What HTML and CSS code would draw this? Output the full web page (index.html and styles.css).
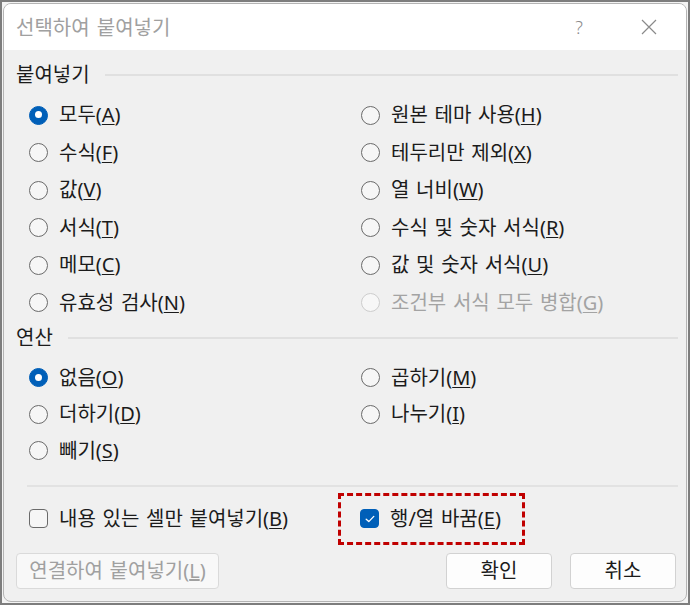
FILE: index.html
```html
<!DOCTYPE html>
<html lang="ko">
<head>
<meta charset="utf-8">
<title>선택하여 붙여넣기</title>
<link rel="stylesheet" href="styles.css">
</head>
<body>
<div class="dialog">
  <div class="titlebar">
    <span class="title">선택하여 붙여넣기</span>
    <span class="help">?</span>
    <span class="close"><svg width="16" height="16" viewBox="0 0 16 16"><path d="M1 1 L15 15 M15 1 L1 15" stroke="#8a8a8a" stroke-width="1.2" fill="none"/></svg></span>
  </div>
  <div class="content">
    <div class="group-label"><span>붙여넣기</span><i class="rule"></i></div>
    <div class="options paste">
      <label class="opt"><span class="radio on"></span>모두(<u>A</u>)</label>
      <label class="opt"><span class="radio"></span>원본 테마 사용(<u>H</u>)</label>
      <label class="opt"><span class="radio"></span>수식(<u>F</u>)</label>
      <label class="opt"><span class="radio"></span>테두리만 제외(<u>X</u>)</label>
      <label class="opt"><span class="radio"></span>값(<u>V</u>)</label>
      <label class="opt"><span class="radio"></span>열 너비(<u>W</u>)</label>
      <label class="opt"><span class="radio"></span>서식(<u>T</u>)</label>
      <label class="opt"><span class="radio"></span>수식 및 숫자 서식(<u>R</u>)</label>
      <label class="opt"><span class="radio"></span>메모(<u>C</u>)</label>
      <label class="opt"><span class="radio"></span>값 및 숫자 서식(<u>U</u>)</label>
      <label class="opt"><span class="radio"></span>유효성 검사(<u>N</u>)</label>
      <label class="opt disabled"><span class="radio"></span>조건부 서식 모두 병합(<u>G</u>)</label>
    </div>
    <div class="group-label op-label"><span>연산</span><i class="rule"></i></div>
    <div class="options ops">
      <label class="opt"><span class="radio on"></span>없음(<u>O</u>)</label>
      <label class="opt"><span class="radio"></span>곱하기(<u>M</u>)</label>
      <label class="opt"><span class="radio"></span>더하기(<u>D</u>)</label>
      <label class="opt"><span class="radio"></span>나누기(<u>I</u>)</label>
      <label class="opt"><span class="radio"></span>빼기(<u>S</u>)</label>
    </div>
    <div class="separator"></div>
    <div class="checks">
      <label class="opt chk-left"><span class="checkbox"></span>내용 있는 셀만 붙여넣기(<u>B</u>)</label>
      <div class="highlight">
        <label class="opt"><span class="checkbox on"><svg width="12" height="12" viewBox="0 0 12 12"><path d="M2.2 6.2 L4.8 8.6 L9.8 3.4" stroke="#fff" stroke-width="1.3" fill="none" stroke-linecap="round" stroke-linejoin="round"/></svg></span>행/열 바꿈(<u>E</u>)</label>
      </div>
    </div>
    <div class="buttons">
      <button class="btn btn-link" disabled>연결하여 붙여넣기(<u>L</u>)</button>
      <span class="spacer"></span>
      <button class="btn">확인</button>
      <button class="btn">취소</button>
    </div>
  </div>
</div>
</body>
</html>
```

FILE: styles.css
```css
* { box-sizing: border-box; }
html, body { margin: 0; padding: 0; }
body {
  width: 690px;
  height: 605px;
  border: 2px solid #7d7d7d;
  padding: 1px;
  background: #f3f3f3;
  font-family: "Noto Sans", "Noto Sans CJK KR", sans-serif;
  font-size: 20px;
  line-height: 24px;
  color: #1b1b1b;
  overflow: hidden;
}
.dialog {
  width: 684px;
  height: 599px;
  border: 1px solid #b4b4b4;
  border-radius: 8px;
  overflow: hidden;
  background: #f0f0f0;
  display: flex;
  flex-direction: column;
}
.titlebar {
  height: 46px;
  background: #ffffff;
  display: flex;
  align-items: center;
  padding-left: 12px;
  flex: none;
}
.title { color: #a0a0a0; font-size: 20px; flex: 1; padding-top: 1px; word-spacing: 2px; }
.help { color: #8a8a8a; font-size: 18px; width: 20px; text-align: center; margin-right: 52px; font-weight: 300; }
.close { width: 16px; height: 16px; margin-right: 29px; display: flex; }
.content {
  flex: 1;
  padding: 13px 8px 0 0;
  display: flex;
  flex-direction: column;
}
.group-label {
  display: flex;
  align-items: center;
  height: 24px;
  padding-left: 12px;
}
.group-label .rule {
  flex: 1;
  height: 2px;
  background: #e0e0e0;
  margin-left: 15px;
}
.op-label { margin-top: 4.5px; }
.options {
  display: grid;
  grid-template-columns: 332px 1fr;
  padding-left: 25px;
}
.paste { grid-auto-rows: 37.5px; margin-top: 9.25px; }
.ops { grid-auto-rows: 36.5px; margin-top: 9.75px; }
.opt {
  display: flex;
  align-items: center;
  white-space: pre;
  word-spacing: 1.5px;
}
.opt u { text-decoration-thickness: 1px; text-underline-offset: 2px; }
.radio {
  width: 19px;
  height: 19px;
  border: 1.5px solid #6a6a6a;
  border-radius: 50%;
  background: #f6f6f6;
  margin-right: 11px;
  flex: none;
  position: relative;
}
.radio.on {
  background: #005fb8;
  border-color: #005fb8;
}
.radio.on::after {
  content: "";
  position: absolute;
  left: 4.5px;
  top: 4.5px;
  width: 7px;
  height: 7px;
  border-radius: 50%;
  background: #ffffff;
}
.disabled { color: #a3a3a3; }
.disabled .radio { border-color: #cdcdcd; background: #f7f7f7; }
.separator {
  height: 2px;
  background: #e2e2e2;
  margin: 16px 0 0 23px;
}
.checks {
  display: flex;
  align-items: center;
  margin-top: 5.5px;
  height: 52px;
  padding-left: 25px;
}
.chk-left { width: 309px; }
.checkbox {
  width: 19px;
  height: 19px;
  border: 1.5px solid #6a6a6a;
  border-radius: 4px;
  background: #f6f6f6;
  margin-right: 11px;
  flex: none;
  display: flex;
  align-items: center;
  justify-content: center;
}
.checkbox.on { background: #005fb8; border-color: #005fb8; }
.highlight {
  height: 52px;
  width: 187px;
  border: 3px dashed #c00000;
  display: flex;
  align-items: center;
  padding-left: 19px;
}
.buttons {
  display: flex;
  margin-top: 8px;
  padding-left: 12px;
  padding-right: 2px;
  gap: 18px;
}
.spacer { flex: 1; }
.btn {
  font-family: inherit;
  font-size: 20px;
  color: #1b1b1b;
  height: 36px;
  width: 106px;
  background: #fdfdfd;
  border: 1px solid #d2d2d2;
  border-radius: 4px;
  padding: 0;
  line-height: 1;
  word-spacing: 1.5px;
}
.btn-link {
  width: 203px;
  color: #a0a0a0;
  background: #f8f8f8;
  border-color: #dadada;
}
```
